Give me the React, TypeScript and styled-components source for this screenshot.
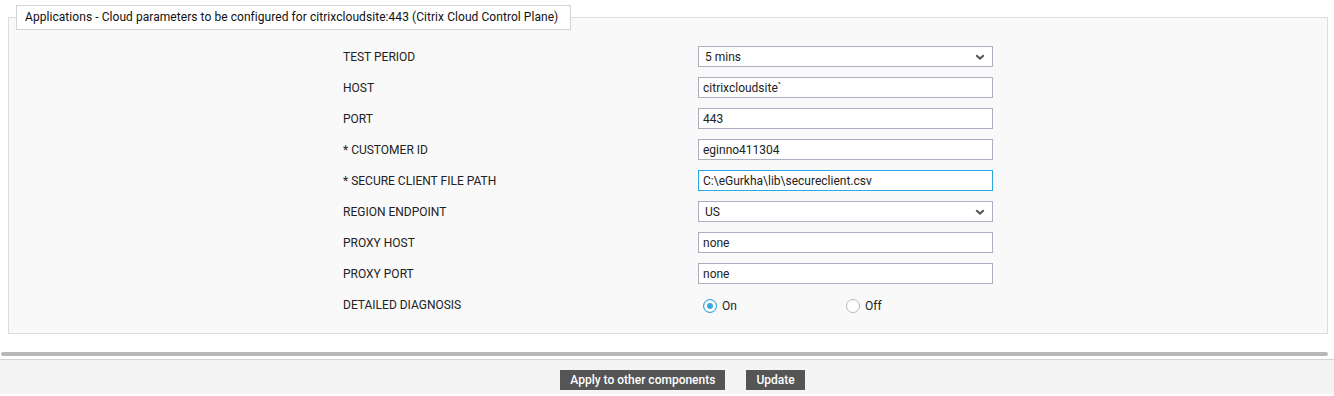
import React from "react";
import styled, { createGlobalStyle } from "styled-components";

const GlobalStyle = createGlobalStyle`
  body {
    margin: 0;
    background: #ffffff;
    font-family: Roboto, "Liberation Sans", Arial, sans-serif;
    font-size: 12px;
    color: #222222;
  }
`;

const Page = styled.div`
  width: 1334px;
  padding-top: 5px;
`;

const Panel = styled.fieldset`
  margin: 0 6px 0 8px;
  padding: 0 7px 18px;
  border: 1px solid #dddddd;
  background: #f9f9f9;
  min-inline-size: 0;
`;

const Legend = styled.legend`
  padding: 4px 12px 4px 8px;
  border: 1px solid #d4d4d4;
  background: #ffffff;
  line-height: 15px;
  font-size: 12px;
  letter-spacing: 0.06px;
  color: #111111;
`;

const FormGrid = styled.div`
  width: 650px;
  margin: 0 auto;
  padding-top: 16px;
  display: grid;
  grid-template-columns: 355px 295px;
  grid-auto-rows: 21px;
  row-gap: 10px;
  align-items: center;
`;

const Label = styled.label`
  font-size: 12px;
  color: #222222;
  line-height: 14px;
`;

const TextInput = styled.input<{ $focused?: boolean }>`
  box-sizing: border-box;
  width: 295px;
  height: 21px;
  margin: 0;
  padding: 0 4px;
  border: 1px solid ${(p) => (p.$focused ? "#2aa9e0" : "#aab0bf")};
  background: #ffffff;
  font-family: Roboto, "Liberation Sans", Arial, sans-serif;
  font-size: 12px;
  color: #222222;
  outline: none;
`;

const SelectBox = styled.div`
  box-sizing: border-box;
  width: 295px;
  height: 21px;
  padding: 0 7px 0 6px;
  border: 1px solid #aab0bf;
  background: #ffffff;
  display: flex;
  align-items: center;
  justify-content: space-between;
  font-size: 12px;
  color: #222222;
`;

const RadioGroup = styled.div`
  display: flex;
  align-items: center;
  height: 21px;
  padding-top: 2px;
`;

const RadioOption = styled.label`
  box-sizing: border-box;
  width: 143px;
  padding-left: 5px;
  display: flex;
  align-items: center;
  gap: 5px;
  font-size: 12px;
  color: #222222;
`;

const RadioDot = styled.input`
  appearance: none;
  box-sizing: border-box;
  width: 14px;
  height: 14px;
  margin: 0;
  border-radius: 50%;
  border: 1px solid #b3b7c0;
  background: #ffffff;

  &:checked {
    border-color: #3aa9dd;
    background: #3aa9dd;
    box-shadow: inset 0 0 0 3px #ffffff;
  }
`;

const Rule = styled.div`
  margin: 18px 6px 0 1px;
  height: 4px;
  border-radius: 2px;
  background: #b8b8b8;
`;

const Footer = styled.div`
  margin-top: 3px;
  border-top: 1px solid #d2d2d2;
  background: #f4f4f4;
  height: 35px;
  padding: 10px 0 0 31px;
  box-sizing: border-box;
  display: flex;
  justify-content: center;
  align-items: flex-start;
  gap: 21px;
`;

const ActionButton = styled.button`
  height: 20px;
  padding: 0 10px;
  border: none;
  background: #555555;
  color: #ffffff;
  font-family: Roboto, "Liberation Sans", Arial, sans-serif;
  font-size: 12px;
  font-weight: 500;
  cursor: pointer;
`;

const Chevron = () => (
  <svg width="10" height="6" viewBox="0 0 10 6">
    <path d="M1.2 1.2 L5 4.6 L8.8 1.2" fill="none" stroke="#555" strokeWidth="2" />
  </svg>
);

type Field =
  | { label: string; kind: "select"; value: string }
  | { label: string; kind: "text"; value: string; focused?: boolean };

const fields: Field[] = [
  { label: "TEST PERIOD", kind: "select", value: "5 mins" },
  { label: "HOST", kind: "text", value: "citrixcloudsite`" },
  { label: "PORT", kind: "text", value: "443" },
  { label: "* CUSTOMER ID", kind: "text", value: "eginno411304" },
  { label: "* SECURE CLIENT FILE PATH", kind: "text", value: "C:\\eGurkha\\lib\\secureclient.csv", focused: true },
  { label: "REGION ENDPOINT", kind: "select", value: "US" },
  { label: "PROXY HOST", kind: "text", value: "none" },
  { label: "PROXY PORT", kind: "text", value: "none" },
];

export default function App() {
  return (
    <>
      <GlobalStyle />
      <Page>
        <Panel>
          <Legend>Applications - Cloud parameters to be configured for citrixcloudsite:443 (Citrix Cloud Control Plane)</Legend>
          <FormGrid>
            {fields.map((f) => (
              <React.Fragment key={f.label}>
                <Label>{f.label}</Label>
                {f.kind === "select" ? (
                  <SelectBox>
                    <span>{f.value}</span>
                    <Chevron />
                  </SelectBox>
                ) : (
                  <TextInput defaultValue={f.value} $focused={f.focused} />
                )}
              </React.Fragment>
            ))}
            <Label>DETAILED DIAGNOSIS</Label>
            <RadioGroup>
              <RadioOption>
                <RadioDot type="radio" name="dd" defaultChecked />
                On
              </RadioOption>
              <RadioOption>
                <RadioDot type="radio" name="dd" />
                Off
              </RadioOption>
            </RadioGroup>
          </FormGrid>
        </Panel>
        <Rule />
        <Footer>
          <ActionButton>Apply to other components</ActionButton>
          <ActionButton>Update</ActionButton>
        </Footer>
      </Page>
    </>
  );
}
